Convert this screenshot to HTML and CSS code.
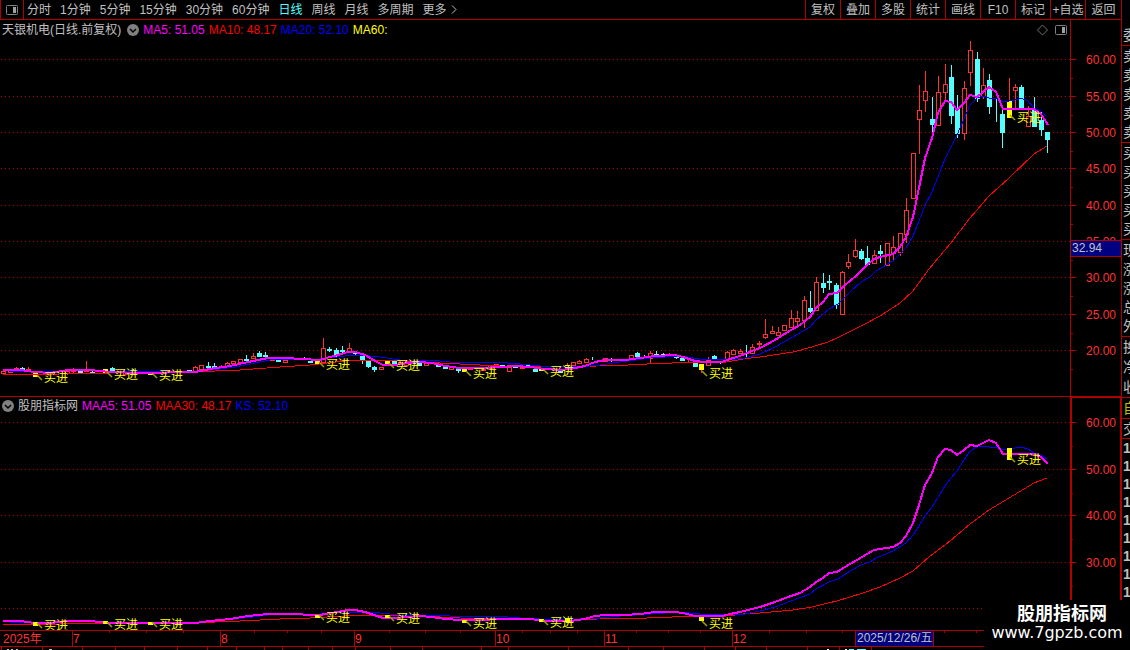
FILE: index.html
```html
<!DOCTYPE html>
<html lang="zh-CN">
<head>
  <meta charset="UTF-8" />
  <meta name="viewport" content="width=device-width, initial-scale=1.0"/>
  <title>天银机电 日线</title>
  <link rel="stylesheet" href="styles.css">
</head>
<body>

<div class="terminal">
  <main class="main">
    <nav class="toolbar">
      <button class="layout-btn" aria-label="布局">
        <svg width="12" height="10" viewBox="0 0 12 10">
          <rect x="0.5" y="0.5" width="11" height="9" rx="1" fill="none" stroke="#808080"/>
          <rect x="7" y="2" width="3" height="6" fill="#a0a0a0"/>
        </svg>
      </button>
      <div class="periods">
        <button>分时</button>
        <button>1分钟</button>
        <button>5分钟</button>
        <button>15分钟</button>
        <button>30分钟</button>
        <button>60分钟</button>
        <button class="active">日线</button>
        <button>周线</button>
        <button>月线</button>
        <button>多周期</button>
        <button class="more">更多
          <svg width="6" height="9" viewBox="0 0 6 9"><path d="M1 0.5L5 4.5L1 8.5" fill="none" stroke="#c0c0c0"/></svg>
        </button>
      </div>
      <div class="tools">
        <button>复权</button>
        <button>叠加</button>
        <button>多股</button>
        <button>统计</button>
        <button>画线</button>
        <button>F10</button>
        <button>标记</button>
        <button>+自选</button>
        <button>返回</button>
      </div>
    </nav>

    <section class="pane">
      <header class="pane-head">
        <div class="legend">
          <span class="name">天银机电(日线.前复权)</span>
          <button class="chevron" aria-label="展开">
            <svg width="12" height="12" viewBox="0 0 12 12">
              <circle cx="6" cy="6" r="6" fill="#808080"/>
              <path d="M3 5L6 8L9 5" fill="none" stroke="#000" stroke-width="1.5"/>
            </svg>
          </button>
          <span class="magenta">MA5: 51.05</span>
          <span class="red">MA10: 48.17</span>
          <span class="blue">MA20: 52.10</span>
          <span class="yellow">MA60:</span>
          <svg class="pane-icons" width="30" height="12" viewBox="0 0 30 12">
            <path d="M5.5 1L10.5 6L5.5 11L0.5 6Z" fill="none" stroke="#707070"/>
            <rect x="18.5" y="1.5" width="11" height="9" rx="1" fill="none" stroke="#808080"/>
            <rect x="25" y="3" width="3" height="6" fill="#a0a0a0"/>
          </svg>
        </div>
        <div class="axis-cap"></div>
      </header>
      <svg id="priceChart" class="chart" viewBox="0 40 1121 356"></svg>
    </section>

    <section class="pane sub">
      <header class="pane-head">
        <div class="legend">
          <button class="chevron" aria-label="展开">
            <svg width="12" height="12" viewBox="0 0 12 12">
              <circle cx="6" cy="6" r="6" fill="#808080"/>
              <path d="M3 5L6 8L9 5" fill="none" stroke="#000" stroke-width="1.5"/>
            </svg>
          </button>
          <span class="name">股朋指标网</span>
          <span class="magenta">MAA5: 51.05</span>
          <span class="red">MAA30: 48.17</span>
          <span class="blue">KS: 52.10</span>
        </div>
        <div class="axis-cap"></div>
      </header>
      <svg id="indicatorChart" class="chart" viewBox="0 415 1121 215"></svg>
    </section>

    <svg id="timeAxis" class="chart" viewBox="0 630 1121 20"></svg>
  </main>

  <aside class="quote">
    <ul class="q-top"><li>委</li></ul>
    <ul class="q-book"><li>卖</li><li>卖</li><li>卖</li><li>卖</li><li>卖</li></ul>
    <ul class="q-book"><li>买</li><li>买</li><li>买</li><li>买</li><li>买</li></ul>
    <ul class="q-book"><li>现</li><li>涨</li><li>涨</li><li>总</li><li>外</li></ul>
    <ul class="q-more"><li>换</li><li>净</li><li>收</li></ul>
    <ul class="q-own"><li>自</li></ul>
    <ul class="q-deal"><li>交</li></ul>
    <ul class="q-ticks"><li>1</li><li>1</li><li>1</li><li>1</li><li>1</li><li>1</li><li>1</li><li>1</li><li>1</li></ul>
  </aside>

  <div class="watermark">
    <strong>股朋指标网</strong>
    <span>www.7gpzb.com</span>
  </div>
</div>

<script src="chart.js"></script>
</body>
</html>
```
FILE: styles.css
```css
* {
  box-sizing: border-box;
}

body {
  margin: 0;
  background: #000;
  color: #c0c0c0;
  font-family: "Liberation Sans", "Noto Sans CJK SC", sans-serif;
  font-size: 12px;
  line-height: 18px;
}

button {
  padding: 0;
  border: 0;
  background: none;
  color: inherit;
  font: inherit;
  white-space: nowrap;
  cursor: pointer;
}

ul {
  list-style: none;
  margin: 0;
  padding: 0;
}

.terminal {
  position: relative;
  display: flex;
  overflow: hidden;
}

.main {
  flex: 1;
  min-width: 0;
}

/* toolbar */
.toolbar {
  display: flex;
  height: 20px;
  border-bottom: 1px solid #b00000;
}

.layout-btn {
  display: flex;
  align-items: center;
  justify-content: center;
  width: 24px;
  border-left: 1px solid #b00000;
  border-right: 1px solid #b00000;
}

.periods {
  display: flex;
  flex: 1;
  gap: 9px;
  padding-left: 3px;
}

.periods .active {
  color: #54ffff;
}

.more {
  display: flex;
  align-items: center;
  gap: 4px;
}

.tools {
  display: flex;
}

.tools button {
  width: 35px;
  border-left: 1px solid #b00000;
}

.tools button:last-child {
  width: 36px;
}

/* panes */
.pane-head {
  display: flex;
  height: 20px;
}

.legend {
  display: flex;
  flex: 1;
  align-items: center;
  gap: 4px;
  padding-left: 2px;
  white-space: nowrap;
}

.chevron {
  display: flex;
}

.name + .chevron {
  margin-left: 2px;
}

.pane-icons {
  margin-left: auto;
  margin-right: 3px;
}

.axis-cap {
  width: 51px;
  border-left: 1px solid #b00000;
}

.sub {
  border-top: 1px solid #b00000;
}

.sub .pane-head {
  height: 18px;
}

.sub .axis-cap {
  border-top: 1px solid #b00000;
  border-left-width: 2px;
  border-right: 1px solid #b00000;
}

.magenta { color: #ff00ff; }
.red { color: #ff0000; }
.blue { color: #0000ff; }
.yellow { color: #ffff00; }

/* charts */
.chart {
  display: block;
  width: 100%;
  height: auto;
  font-size: 12px;
}

.chart .grid {
  stroke: #b00000;
  stroke-dasharray: 1 3;
  shape-rendering: crispEdges;
}

.chart .frame {
  fill: #b00000;
  shape-rendering: crispEdges;
}

.chart .scale {
  fill: #ff3232;
}

.chart .up {
  fill: #000;
  stroke: #ff3232;
  shape-rendering: crispEdges;
}

.chart .down {
  fill: #54ffff;
  stroke: #54ffff;
  shape-rendering: crispEdges;
}

.chart .line {
  fill: none;
  shape-rendering: crispEdges;
}

.chart .ma5 { stroke: #ff00ff; stroke-width: 2; }
.chart .ma10 { stroke: #ff0000; }
.chart .ma20 { stroke: #0000ff; }

.chart .signal {
  fill: #ffff00;
}

.chart .pointer {
  stroke: #a0a000;
  stroke-width: 1.5;
}

.chart .tag {
  fill: #000080;
  stroke: #b00000;
  shape-rendering: crispEdges;
}

.chart .tag-text {
  fill: #c0c0c0;
}

/* quote column, cut off at the window edge */
.quote {
  width: 9px;
  border-left: 1px solid #b00000;
  overflow: hidden;
  font-size: 14px;
}

.quote ul {
  display: flex;
  flex-direction: column;
  justify-content: space-around;
  padding-left: 1px;
  border-bottom: 1px solid #b00000;
}

.quote li {
  width: 20px;
}

.quote .q-top { height: 46px; padding-top: 25px; }
.quote .q-book { height: 97px; }
.quote .q-more { height: 61px; }
.quote .q-own { height: 21px; color: #c0c000; }
.quote .q-deal { height: 20px; }

.quote .q-ticks {
  border-bottom: 0;
  font-weight: bold;
}

.watermark {
  position: absolute;
  right: 0;
  bottom: 0;
  display: flex;
  flex-direction: column;
  align-items: center;
  width: 146px;
  height: 50px;
  padding-top: 4px;
  background: #000;
  color: #fff;
}

.watermark strong {
  font-size: 18px;
  line-height: 20px;
  padding-left: 10px;
}

.watermark span {
  font-family: "DejaVu Sans", sans-serif;
  font-size: 16px;
}
```
FILE: chart.js
```javascript
const NS = 'http://www.w3.org/2000/svg';

const priceChart = document.getElementById('priceChart');
const indicatorChart = document.getElementById('indicatorChart');
const timeAxis = document.getElementById('timeAxis');

function add(parent, tag, attrs, text) {
  const el = document.createElementNS(NS, tag);
  for (const key in attrs) el.setAttribute(key, attrs[key]);
  if (text) el.textContent = text;
  parent.appendChild(el);
}

// x, high, body top, body bottom, low, type (u = up, d = down, y = signal bar)
const candles = [
  [3, 370, 371, 373, 374, 'u'], [10, 369, 370, 372, 373, 'u'], [16, 367, 368, 370, 371, 'u'],
  [22, 367, 368, 369, 371, 'd'], [28, 367, 369, 370, 371, 'u'], [35, 371, 372, 376, 377, 'y'],
  [67, 369, 371, 373, 375, 'u'], [73, 368, 370, 371, 373, 'u'], [80, 369, 371, 372, 373, 'd'],
  [86, 361, 370, 371, 372, 'u'], [92, 371, 372, 373, 374, 'd'], [105, 369, 369, 373, 374, 'y'],
  [112, 367, 368, 370, 372, 'd'], [125, 371, 372, 374, 375, 'u'], [133, 369, 371, 372, 375, 'd'],
  [150, 372, 372, 374, 375, 'y'], [189, 370, 370, 371, 372, 'd'], [195, 366, 367, 371, 372, 'u'],
  [201, 365, 365, 369, 370, 'u'], [208, 362, 366, 367, 368, 'd'], [214, 363, 366, 367, 368, 'd'],
  [221, 365, 366, 368, 369, 'u'], [227, 362, 363, 366, 367, 'u'], [233, 361, 361, 363, 366, 'u'],
  [240, 359, 359, 362, 364, 'u'], [246, 355, 359, 360, 362, 'd'], [253, 353, 356, 358, 359, 'u'],
  [259, 351, 353, 356, 357, 'd'], [265, 352, 355, 356, 358, 'd'], [272, 357, 358, 360, 360, 'u'],
  [278, 357, 359, 361, 362, 'd'], [285, 360, 360, 362, 362, 'u'], [304, 357, 358, 359, 360, 'd'],
  [310, 361, 361, 362, 362, 'd'], [317, 361, 361, 363, 363, 'y'], [323, 338, 348, 362, 363, 'u'],
  [329, 347, 349, 350, 352, 'd'], [336, 348, 350, 354, 357, 'd'], [342, 346, 350, 351, 355, 'd'],
  [349, 343, 348, 351, 352, 'u'], [355, 351, 352, 353, 355, 'd'], [362, 356, 356, 359, 364, 'd'],
  [368, 361, 361, 366, 368, 'd'], [374, 366, 367, 369, 372, 'd'], [381, 367, 367, 369, 369, 'u'],
  [387, 361, 361, 363, 364, 'y'], [394, 361, 361, 364, 365, 'd'], [400, 361, 362, 364, 365, 'u'],
  [406, 361, 362, 365, 366, 'u'], [413, 360, 361, 363, 364, 'd'], [419, 363, 363, 365, 366, 'd'],
  [426, 363, 363, 365, 366, 'u'], [438, 362, 364, 366, 367, 'd'], [445, 366, 366, 368, 369, 'd'],
  [451, 367, 367, 369, 369, 'u'], [458, 367, 368, 370, 373, 'd'], [464, 368, 368, 371, 372, 'y'],
  [470, 367, 367, 369, 370, 'u'], [483, 369, 369, 370, 371, 'u'], [490, 365, 365, 368, 369, 'u'],
  [496, 364, 364, 366, 366, 'u'], [502, 365, 365, 366, 367, 'd'], [509, 366, 367, 371, 372, 'u'],
  [515, 365, 366, 367, 368, 'd'], [522, 367, 367, 368, 369, 'u'], [528, 365, 365, 366, 367, 'd'],
  [535, 366, 369, 371, 372, 'd'], [541, 368, 368, 370, 371, 'y'], [560, 370, 370, 372, 372, 'd'],
  [567, 363, 365, 368, 369, 'y'], [573, 362, 362, 365, 367, 'u'], [579, 360, 361, 363, 364, 'u'],
  [586, 358, 359, 362, 363, 'u'], [592, 357, 359, 359, 360, 'd'], [605, 358, 358, 361, 361, 'u'],
  [611, 358, 359, 360, 362, 'd'], [624, 359, 360, 361, 362, 'u'], [631, 355, 355, 359, 360, 'u'],
  [637, 352, 353, 356, 357, 'd'], [644, 355, 357, 357, 359, 'd'], [650, 351, 353, 358, 363, 'u'],
  [656, 351, 354, 355, 357, 'd'], [663, 353, 354, 356, 357, 'd'], [669, 353, 354, 355, 356, 'u'],
  [676, 354, 355, 357, 359, 'd'], [682, 357, 358, 360, 361, 'd'], [688, 360, 361, 361, 362, 'u'],
  [695, 363, 363, 366, 367, 'd'], [701, 364, 364, 369, 373, 'y'], [708, 357, 360, 365, 366, 'u'],
  [714, 355, 356, 359, 360, 'd'], [720, 362, 363, 363, 364, 'd'], [727, 351, 352, 359, 360, 'u'],
  [733, 349, 350, 354, 355, 'u'], [740, 349, 351, 353, 354, 'u'], [746, 345, 350, 350, 357, 'd'],
  [752, 344, 347, 353, 354, 'u'], [759, 341, 343, 344, 348, 'u'], [765, 319, 334, 337, 339, 'u'],
  [772, 326, 331, 333, 334, 'u'], [778, 327, 332, 335, 336, 'u'], [784, 325, 325, 330, 331, 'u'],
  [791, 310, 318, 327, 328, 'u'], [797, 311, 318, 321, 328, 'u'], [804, 296, 300, 320, 328, 'u'],
  [810, 291, 308, 311, 313, 'd'], [816, 277, 282, 310, 311, 'u'], [823, 273, 283, 287, 293, 'd'],
  [829, 275, 281, 282, 290, 'd'], [836, 283, 285, 304, 309, 'd'], [842, 271, 272, 314, 315, 'u'],
  [848, 254, 262, 266, 269, 'u'], [855, 239, 250, 256, 258, 'u'], [861, 249, 251, 258, 260, 'd'],
  [867, 246, 258, 264, 265, 'd'], [874, 250, 255, 263, 264, 'u'], [880, 245, 251, 253, 263, 'd'],
  [887, 243, 243, 265, 266, 'u'], [893, 236, 247, 253, 261, 'u'], [900, 233, 233, 252, 256, 'u'],
  [906, 198, 210, 234, 243, 'u'], [913, 153, 153, 198, 199, 'u'], [919, 85, 110, 119, 154, 'u'],
  [925, 71, 91, 100, 112, 'u'], [932, 97, 119, 124, 138, 'd'], [938, 76, 92, 125, 126, 'u'],
  [945, 64, 84, 92, 100, 'u'], [951, 65, 77, 115, 124, 'd'], [957, 95, 109, 133, 138, 'd'],
  [964, 81, 88, 133, 140, 'u'], [970, 41, 50, 72, 86, 'u'], [977, 52, 59, 98, 102, 'd'],
  [983, 68, 85, 96, 99, 'u'], [989, 74, 80, 106, 114, 'd'], [996, 99, 116, 116, 122, 'd'],
  [1002, 110, 114, 132, 148, 'd'], [1009, 78, 101, 117, 118, 'y'], [1015, 84, 87, 90, 108, 'u'],
  [1021, 85, 87, 107, 108, 'd'], [1028, 106, 116, 126, 127, 'u'], [1034, 97, 110, 126, 127, 'd'],
  [1041, 112, 120, 129, 136, 'd'], [1047, 132, 132, 139, 153, 'd']
];

const ma5 = [
  [3, 370], [20, 370], [35, 372], [50, 373], [68, 370], [90, 370], [110, 372], [140, 373],
  [195, 372], [210, 369], [230, 366], [248, 362], [258, 360], [268, 358], [285, 358], [320, 360],
  [330, 357], [338, 355], [348, 352], [355, 352], [365, 355], [377, 362], [383, 365], [395, 365],
  [407, 363], [420, 362], [432, 363], [445, 366], [460, 368], [480, 368], [500, 367], [515, 366],
  [530, 367], [545, 369], [560, 370], [570, 369], [585, 366], [595, 362], [605, 360], [625, 360],
  [640, 358], [655, 356], [675, 355], [683, 357], [695, 361], [705, 362], [722, 362], [730, 359],
  [740, 356], [752, 351], [760, 348], [775, 340], [791, 330], [800, 325], [810, 317], [816, 308],
  [823, 302], [829, 294], [837, 293], [845, 285], [850, 281], [857, 275], [867, 265], [874, 259],
  [880, 257], [893, 254], [900, 247], [906, 237], [913, 217], [919, 188], [925, 158], [932, 138],
  [938, 113], [945, 101], [951, 102], [957, 110], [964, 103], [970, 95], [977, 97], [983, 92],
  [989, 87], [996, 92], [1003, 109], [1034, 109], [1041, 114], [1048, 125]
];

const ma20 = [
  [10, 372], [60, 371], [110, 371], [195, 372], [235, 367], [260, 362], [275, 359], [320, 359],
  [345, 356], [360, 355], [380, 357], [400, 360], [430, 360], [450, 362], [495, 362], [520, 364],
  [540, 366], [580, 367], [600, 365], [620, 362], [650, 358], [680, 356], [700, 359], [730, 360],
  [745, 358], [760, 354], [775, 347], [791, 338], [810, 327], [816, 320], [829, 309], [838, 304],
  [850, 292], [861, 282], [870, 277], [876, 271], [893, 261], [906, 248], [913, 236], [919, 221],
  [925, 205], [932, 192], [945, 159], [951, 147], [957, 135], [964, 119], [970, 105], [977, 98],
  [983, 96], [989, 98], [996, 98], [1003, 102], [1015, 100], [1021, 98], [1028, 101], [1034, 108],
  [1041, 111], [1047, 117]
];

const ma10 = [
  [3, 375], [60, 374], [110, 373], [190, 372], [240, 370], [280, 367], [310, 365], [345, 361],
  [370, 360], [390, 360], [420, 362], [460, 364], [500, 366], [560, 367], [597, 366], [628, 365],
  [647, 364], [672, 363], [727, 362], [743, 359], [760, 357], [793, 352], [812, 347], [828, 342],
  [837, 338], [863, 325], [880, 316], [900, 303], [913, 291], [929, 269], [950, 244], [970, 218],
  [989, 196], [1009, 178], [1034, 154], [1047, 146]
];

// 买进 signals: x, label baseline in the price pane, label baseline in the indicator pane
const signals = [
  [44, 382, 630], [114, 379, 629], [159, 380, 629], [326, 369, 622], [396, 370, 623],
  [473, 378, 628], [550, 376, 627], [709, 378, 628], [1017, 122, 464]
];

// signal bars of the indicator pane: x, y, height
const bars = [
  [35, 622, 4], [105, 621, 3], [150, 622, 3], [317, 615, 3], [387, 615, 3],
  [464, 620, 3], [541, 619, 3], [567, 618, 4], [701, 617, 4], [1009, 448, 12]
];

// price pane y -> indicator pane y
const toIndicator = y => 422 + (y - 59) * 0.641;

function drawGrid(svg, levels, bottom, width, top) {
  add(svg, 'rect', { class: 'frame', x: 1070, y: top, width: width, height: bottom - top });
  const step = levels[1][0] - levels[0][0];
  levels.forEach(([y, label]) => {
    add(svg, 'line', { class: 'grid', x1: 1, x2: 1070, y1: y + 0.5, y2: y + 0.5 });
    add(svg, 'rect', { class: 'frame', x: 1070, y: y, width: 6, height: 1 });
    if (label) add(svg, 'text', { class: 'scale', x: 1086, y: y + 5 }, label);
    add(svg, 'rect', { class: 'frame', x: 1070, y: y + Math.round(step / 2), width: 3, height: 1 });
  });
}

function drawLine(svg, points, name, map) {
  const path = points.map(([x, y]) => x + ',' + Math.round(map ? map(y) : y)).join(' ');
  add(svg, 'polyline', { class: 'line ' + name, points: path });
}

function drawSignal(svg, x, y) {
  add(svg, 'line', { class: 'pointer', x1: x - 7, y1: y - 7, x2: x - 2, y2: y - 2 });
  add(svg, 'text', { class: 'signal', x: x, y: y }, '买进');
}

function drawCandle(svg, [x, high, top, bottom, low, type]) {
  const name = type === 'd' ? 'down' : 'up';
  add(svg, 'line', { class: name, x1: x + 0.5, x2: x + 0.5, y1: high, y2: low });
  if (type === 'y') {
    add(svg, 'rect', { class: 'signal', x: x - 2, y: top, width: 5, height: bottom - top + 1 });
  } else {
    add(svg, 'rect', { class: name, x: x - 1.5, y: top + 0.5, width: 4, height: bottom - top });
  }
}

// price pane
drawGrid(priceChart, [
  [59, '60.00'], [96, '55.00'], [132, '50.00'], [168, '45.00'], [205, '40.00'],
  [241, '35.00'], [277, '30.00'], [314, '25.00'], [350, '20.00']
], 396, 1, 40);
candles.forEach(c => drawCandle(priceChart, c));
drawLine(priceChart, ma10, 'ma10');
drawLine(priceChart, ma20, 'ma20');
drawLine(priceChart, ma5, 'ma5');
signals.forEach(([x, y]) => drawSignal(priceChart, x, y));
add(priceChart, 'rect', { class: 'tag', x: 1070.5, y: 240.5, width: 51, height: 16 });
add(priceChart, 'text', { class: 'tag-text', x: 1072, y: 252 }, '32.94');

// indicator pane
drawGrid(indicatorChart, [
  [422, '60.00'], [469, '50.00'], [515, '40.00'], [562, '30.00'], [608, '']
], 630, 2, 415);
add(indicatorChart, 'rect', { class: 'frame', x: 1120, y: 415, width: 1, height: 215 });
drawLine(indicatorChart, ma10, 'ma10', toIndicator);
drawLine(indicatorChart, ma20, 'ma20', toIndicator);
drawLine(indicatorChart, ma5, 'ma5', toIndicator);
bars.forEach(([x, y, h]) => add(indicatorChart, 'rect', { class: 'signal', x: x - 2, y: y, width: 5, height: h }));
signals.forEach(([x, , y]) => drawSignal(indicatorChart, x, y));

// time axis
add(timeAxis, 'rect', { class: 'frame', x: 0, y: 630, width: 1121, height: 1 });
add(timeAxis, 'rect', { class: 'frame', x: 0, y: 646, width: 1121, height: 1 });
[[2, '2025年'], [72, '7'], [220, '8'], [354, '9'], [495, '10'], [604, '11'], [732, '12']].forEach(([x, label], i) => {
  if (i) add(timeAxis, 'rect', { class: 'frame', x: x, y: 630, width: 1, height: 16 });
  add(timeAxis, 'text', { class: 'scale', x: x + 1, y: 643 }, label);
});
[109, 146, 183, 254, 287, 321, 389, 425, 460, 522, 550, 577, 636, 668, 700, 769, 806, 842, 944, 976].forEach(x => {
  add(timeAxis, 'rect', { class: 'frame', x: x, y: 631, width: 1, height: 2 });
});
[1, 42, 82, 115, 144, 177, 207, 236, 264, 282, 308, 332, 355, 390, 422, 481, 508, 568, 628, 663, 704, 735, 766, 807, 839, 871].forEach(x => {
  add(timeAxis, 'rect', { class: 'frame', x: x, y: 647, width: 1, height: 3 });
});
add(timeAxis, 'rect', { class: 'tag', x: 855.5, y: 630.5, width: 78, height: 16 });
add(timeAxis, 'text', { class: 'tag-text', x: 857, y: 642 }, '2025/12/26/五');
// tops of the next pane's labels
[[7, 2, '#c0c0c0'], [11, 2, '#c0c0c0'], [16, 2, '#c0c0c0'], [49, 3, '#c0c0c0'], [827, 2, '#fff'],
 [845, 2, '#fff'], [849, 5, '#54ffff'], [857, 9, '#54ffff']].forEach(([x, w, fill]) => {
  add(timeAxis, 'rect', { x: x, y: 649, width: w, height: 1, fill: fill });
});
```
